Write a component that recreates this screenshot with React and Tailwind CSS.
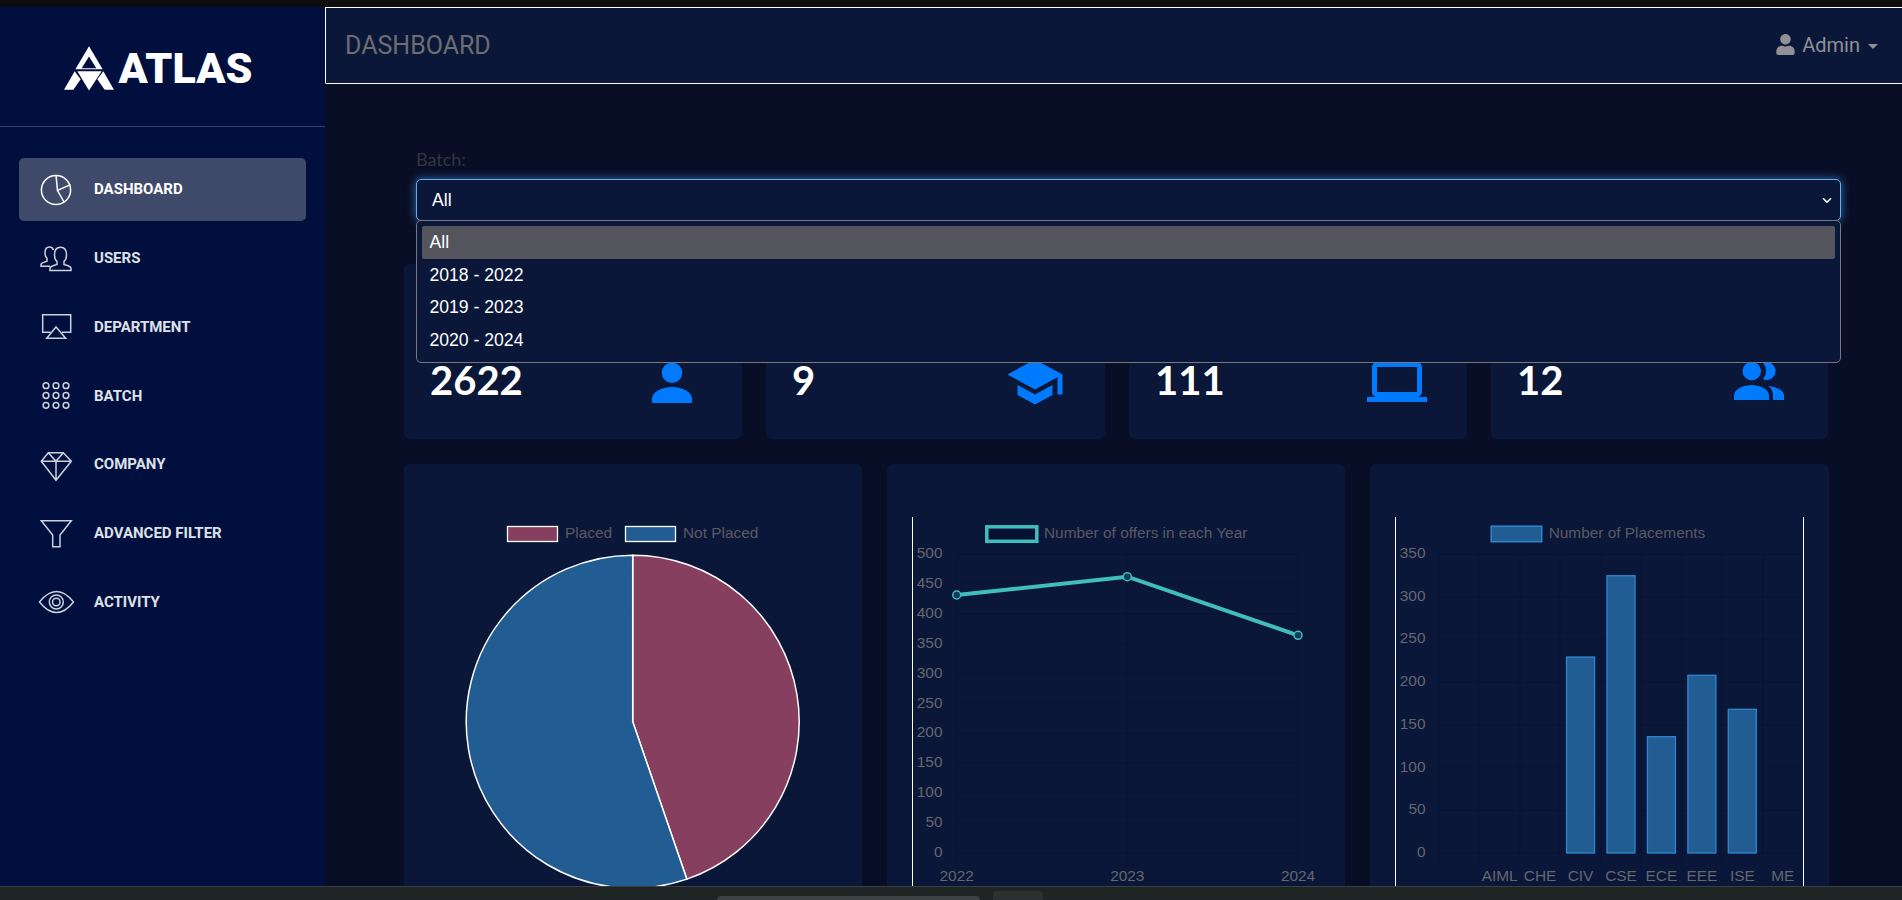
import { FaUser } from 'react-icons/fa';
import { MdSchool, MdLaptop } from 'react-icons/md';

// sidebar line icons, drawn in a 36x36 box
function PieIcon() {
  return (
    <>
      <circle cx="18" cy="18" r="14.6" />
      <path d="M18 3.4 19.5 18.5 32.6 12.6M19.5 18.5 26 30" />
    </>
  );
}

function UsersIcon() {
  return (
    <>
      <path d="M12 30.5v-2c0-1.5 1.5-2.2 3-2.7l4-1.4v-3c-1.800-1.5-2.500-3.500-2.500-6.500 0-4.500 2-7.600 6-7.600s6 3.100 6 7.600c0 3-.7 5-2.500 6.500v3l4 1.400c1.500.5 3 1.200 3 2.700v2z" />
      <path d="M12 26.300H3v-1.600c0-1.300 1.300-1.900 2.700-2.300l3.300-1.100v-3c-1.500-1.300-2-3-2-5.600 0-3.600 1.700-5.600 4.500-5.600 2 0 3.300 1 3.900 2.800" />
    </>
  );
}

function AirplayIcon() {
  return <path d="M12.500 23.300H4.700V5.700h28v17.600H24M18 18 8.700 29.300h19z" />;
}

function GridIcon() {
  const spots = [
    [8, 7.7], [18, 7.7], [28, 7.7],
    [8, 17.500], [18, 17.500], [28, 17.500],
    [8, 27.300], [18, 27.300], [28, 27.300],
  ];
  return spots.map(([x, y]) => <circle key={`${x}-${y}`} cx={x} cy={y} r="2.900" />);
}

function DiamondIcon() {
  return <path d="M10.300 5.700h15l8 8.600L18 33.300 3.300 14.300zM3.300 14.300h30M10.300 5.700 18 14.300l7.300-8.600M18 14.300v19" />;
}

function FunnelIcon() {
  return <path d="M3.300 5.700h30L22 20v11.700h-7.300V20z" />;
}

function EyeIcon() {
  return (
    <>
      <path d="M1.500 18C7 11 12 7.500 18.500 7.500S30 11 35.500 18C30 25 25 28.500 18.500 28.500S7 25 1.500 18z" />
      <circle cx="18.300" cy="18" r="7" />
      <circle cx="18.300" cy="18" r="3.800" />
    </>
  );
}

const navItems = [
  { label: 'Dashboard', icon: PieIcon, active: true },
  { label: 'Users', icon: UsersIcon },
  { label: 'Department', icon: AirplayIcon },
  { label: 'Batch', icon: GridIcon },
  { label: 'Company', icon: DiamondIcon },
  { label: 'Advanced Filter', icon: FunnelIcon },
  { label: 'Activity', icon: EyeIcon },
];

function Logo() {
  return (
    <div className="flex items-end justify-center gap-[5px] pr-[9px]">
      <svg width="50" height="45" viewBox="190 133 150 134" className="fill-white">
        <path fillRule="evenodd" d="M265 133 306 202H224ZM265 164 243 199H287Z" />
        <path d="M230 208H303L265 266ZM222 208 190 264H218L240 232ZM308 208 340 264H312L290 232Z" />
      </svg>
      <span className="font-['Roboto',sans-serif] font-black text-[43px] leading-[42px] mb-[2px] text-white">
        ATLAS
      </span>
    </div>
  );
}

function Sidebar() {
  return (
    <aside className="w-[325px] shrink-0 bg-[#000f3d] flex flex-col">
      <div className="h-[120px] shrink-0 border-b border-[#323d68] flex items-center justify-center pt-[3px]">
        <Logo />
      </div>
      <nav className="px-[19px] pt-[31px] flex flex-col gap-[5.800px]">
        {navItems.map(({ label, icon: Icon, active }) => (
          <a
            key={label}
            className={`h-[63px] rounded-[5px] pl-[19px] flex items-center gap-[20px] font-['Roboto',sans-serif] font-bold text-[15px] uppercase ${
              active ? 'bg-[#3f4a6b] text-white' : 'text-[#dde1e8]'
            }`}
          >
            <svg
              width="36"
              height="36"
              viewBox="0 0 36 36"
              fill="none"
              strokeWidth="1.500"
              className={`shrink-0 overflow-visible ${active ? 'stroke-white' : 'stroke-[#ccd1dc]'}`}
            >
              <Icon />
            </svg>
            {label}
          </a>
        ))}
      </nav>
    </aside>
  );
}

function TopBar() {
  return (
    <header className="h-[77px] shrink-0 bg-[#0a1739] border-y border-l border-white rounded-bl-[2px] pl-[19px] pr-[24px] flex items-center justify-between font-['Roboto',sans-serif]">
      <h1 className="text-[25px] font-normal text-[#6d6d72] mt-[1px]">DASHBOARD</h1>
      <div className="flex items-center text-[#909095] text-[20px] mb-[2px]">
        <FaUser size={21} />
        <span className="ml-[6px]">Admin</span>
        <svg width="10" height="5" viewBox="0 0 10 5" className="ml-[8px] mt-[3px] fill-[#909095]">
          <path d="M0 0h10L5 5z" />
        </svg>
      </div>
    </header>
  );
}

function BatchSelect() {
  const options = ['All', '2018 - 2022', '2019 - 2023', '2020 - 2024'];
  return (
    <div className="pl-[91px] pr-[61px] pt-[63px]">
      <label className="block font-['Lato',sans-serif] text-[18px] leading-[24px] text-[#33353e] mb-[8px]">
        Batch:
      </label>
      <div className="relative font-['Liberation_Sans',sans-serif] text-[17.6px] text-white">
        <div className="h-[42px] rounded-[5px] bg-[#0a1739] border border-[#64aef0] shadow-[0_0_10px_rgba(70,150,235,0.7)] pl-[15px] pr-[8px] flex items-center justify-between">
          <span>All</span>
          <svg width="10" height="7" viewBox="0 0 10 7" fill="none" stroke="white" strokeWidth="1.600">
            <path d="M1 1.200 5 5.200 9 1.200" />
          </svg>
        </div>
        <ul className="absolute z-10 left-0 right-0 top-[41px] h-[143px] bg-[#0a1739] border border-[#77777d] rounded-[5px] p-[5px]">
          {options.map((option, i) => (
            <li
              key={option}
              className={`h-[32.500px] pl-[7.500px] flex items-center rounded-[2px] ${i === 0 ? 'bg-[#54545c]' : ''}`}
            >
              {option}
            </li>
          ))}
        </ul>
      </div>
    </div>
  );
}

function PersonGlyph() {
  return (
    <svg width="60" height="60" viewBox="0 0 24 24" className="fill-[#007bff]">
      <circle cx="12" cy="8.300" r="4.100" />
      <path d="M4 20.400v-1.600C4 15.600 8.500 14 12 14s8 1.600 8 4.800v1.600z" />
    </svg>
  );
}

function GroupGlyph() {
  return (
    <svg width="60" height="60" viewBox="0 0 24 24" className="fill-[#007bff]">
      <circle cx="9.500" cy="7.600" r="3.700" />
      <path d="M14 4.300a3.600 3.600 0 1 1 0 6.600 5 5 0 0 0 0-6.600z" />
      <path d="M2.400 19.200v-1.600c0-3 4-4.400 7-4.400s7 1.400 7 4.400v1.600z" />
      <path d="M18 19.200v-1.800c0-1.600-.7-2.900-2-3.800 2.600.2 6.400 1.400 6.400 3.800v1.800z" />
    </svg>
  );
}

const stats = [
  { value: '2622', icon: <PersonGlyph /> },
  { value: '9', icon: <MdSchool size={60} className="text-[#007bff]" /> },
  { value: '111', icon: <MdLaptop size={60} className="text-[#007bff]" /> },
  { value: '12', icon: <GroupGlyph /> },
];

function StatCards() {
  return (
    <div className="grid grid-cols-[338px_339px_338px_337px] gap-x-[24px]">
      {stats.map(({ value, icon }) => (
        <div
          key={value}
          className="h-[175px] rounded-[6px] bg-[#0a1739] pl-[26px] pr-[40px] pt-[88px] flex justify-between"
        >
          <span className="font-['Lato',sans-serif] font-bold text-[40px] leading-[56px] text-white">{value}</span>
          <span>{icon}</span>
        </div>
      ))}
    </div>
  );
}

const tickText = "font-['Liberation_Sans',sans-serif] text-[15.400px] fill-[#66666d]";
const legendText = "font-['Liberation_Sans',sans-serif] text-[15.400px] fill-[#5a5a62]";

function PieChart() {
  return (
    <svg width="458" height="430" viewBox="404 464 458 430" className="block">
      <rect x="507.500" y="526.500" width="50" height="15" fill="#873f5f" stroke="white" strokeWidth="1.300" />
      <text x="565" y="538" className={legendText}>Placed</text>
      <rect x="625.500" y="526.500" width="50" height="15" fill="#215d93" stroke="white" strokeWidth="1.300" />
      <text x="683" y="538" className={legendText}>Not Placed</text>
      <path
        d="M632.700 555.200A166.500 166.500 0 0 1 686.850 879.150L632.700 721.700Z"
        fill="#873f5f"
        stroke="white"
        strokeWidth="1.500"
      />
      <path
        d="M632.700 555.200A166.500 166.500 0 1 0 686.850 879.150L632.700 721.700Z"
        fill="#215d93"
        stroke="white"
        strokeWidth="1.500"
      />
    </svg>
  );
}

function LineChart() {
  const ticks = [500, 450, 400, 350, 300, 250, 200, 150, 100, 50, 0];
  const points = [
    { label: '2022', x: 956.700, y: 595 },
    { label: '2023', x: 1127.300, y: 576.700 },
    { label: '2024', x: 1298, y: 635.300 },
  ];
  return (
    <svg width="458" height="430" viewBox="887 464 458 430" className="block">
      <line x1="912.500" y1="517" x2="912.500" y2="894" stroke="white" />
      <rect x="986.800" y="526.800" width="50" height="14.500" fill="#071233" stroke="#41bdbd" strokeWidth="3.500" />
      <text x="1044" y="538" className={legendText}>Number of offers in each Year</text>
      {ticks.map((tick, i) => {
        const y = 554 + i * 29.900;
        return (
          <g key={tick}>
            <line x1="957" y1={y} x2="1298" y2={y} stroke="#091534" />
            <text x="942.500" y={y + 4} textAnchor="end" className={tickText}>{tick}</text>
          </g>
        );
      })}
      {points.map(({ label, x }) => (
        <g key={label}>
          <line x1={x} y1="554" x2={x} y2="861" stroke="#091534" />
          <text x={x} y="881" textAnchor="middle" className={tickText}>{label}</text>
        </g>
      ))}
      <polyline
        points={points.map((p) => `${p.x},${p.y}`).join(' ')}
        fill="none"
        stroke="#41bdbd"
        strokeWidth="4"
      />
      {points.map(({ label, x, y }) => (
        <circle key={label} cx={x} cy={y} r="4" fill="#173a5c" stroke="#41bdbd" strokeWidth="1.500" />
      ))}
    </svg>
  );
}

function BarChart() {
  const ticks = [350, 300, 250, 200, 150, 100, 50, 0];
  const slots = ['', 'AIML', 'CHE', 'CIV', 'CSE', 'ECE', 'EEE', 'ISE', 'ME'];
  const heights = { CIV: 657, CSE: 575.700, ECE: 736.700, EEE: 675.300, ISE: 709.300 };
  return (
    <svg width="459" height="430" viewBox="1370 464 459 430" className="block">
      <line x1="1395.500" y1="517" x2="1395.500" y2="894" stroke="white" />
      <line x1="1803.500" y1="517" x2="1803.500" y2="894" stroke="white" />
      <rect x="1491.200" y="526.200" width="50.500" height="15.500" fill="#215d93" stroke="#2f86d0" strokeWidth="1.500" />
      <text x="1548.700" y="538" className={legendText}>Number of Placements</text>
      {ticks.map((tick, i) => {
        const y = 554 + i * 42.710;
        return (
          <g key={tick}>
            <line x1="1439" y1={y} x2="1803" y2={y} stroke="#091534" />
            <text x="1425.500" y={y + 4} textAnchor="end" className={tickText}>{tick}</text>
          </g>
        );
      })}
      {slots.map((slot, i) => {
        const left = 1439 + i * 40.440;
        const mid = left + 20.220;
        return (
          <g key={i}>
            <line x1={left} y1="554" x2={left} y2="861" stroke="#091534" />
            {heights[slot] && (
              <rect
                x={mid - 14}
                y={heights[slot]}
                width="28"
                height={853 - heights[slot]}
                fill="#215d93"
                stroke="#2f86d0"
                strokeWidth="1.300"
              />
            )}
            <text x={mid} y="881" textAnchor="middle" className={tickText}>{slot}</text>
          </g>
        );
      })}
    </svg>
  );
}

function Charts() {
  return (
    <div className="grid grid-cols-[458px_458px_459px] gap-x-[25px] mt-[25px]">
      <div className="h-[430px] rounded-[6px] bg-[#0a1739] overflow-hidden"><PieChart /></div>
      <div className="h-[430px] rounded-[6px] bg-[#0a1739] overflow-hidden"><LineChart /></div>
      <div className="h-[430px] rounded-[6px] bg-[#0a1739] overflow-hidden"><BarChart /></div>
    </div>
  );
}

export default function App() {
  return (
    <div className="h-screen overflow-hidden flex flex-col bg-[#080e26]">
      <div className="h-[7px] shrink-0 bg-[#0d0d0d]" />
      <div className="flex-1 min-h-0 flex">
        <Sidebar />
        <main className="flex-1 min-w-0 overflow-hidden flex flex-col">
          <TopBar />
          <BatchSelect />
          <div className="pl-[79px] pr-[73px] mt-[43px]">
            <StatCards />
            <Charts />
          </div>
        </main>
      </div>
      <div className="h-[14px] shrink-0 bg-[#1f2425] border-t border-[#3b3f40] pl-[717px] flex items-end gap-[13px]">
        <div className="w-[263px] h-[4px] rounded-t-[6px] bg-[#3c4142]" />
        <div className="w-[50px] h-[9px] rounded-t-[3px] bg-[#2b3031]" />
      </div>
    </div>
  );
}
